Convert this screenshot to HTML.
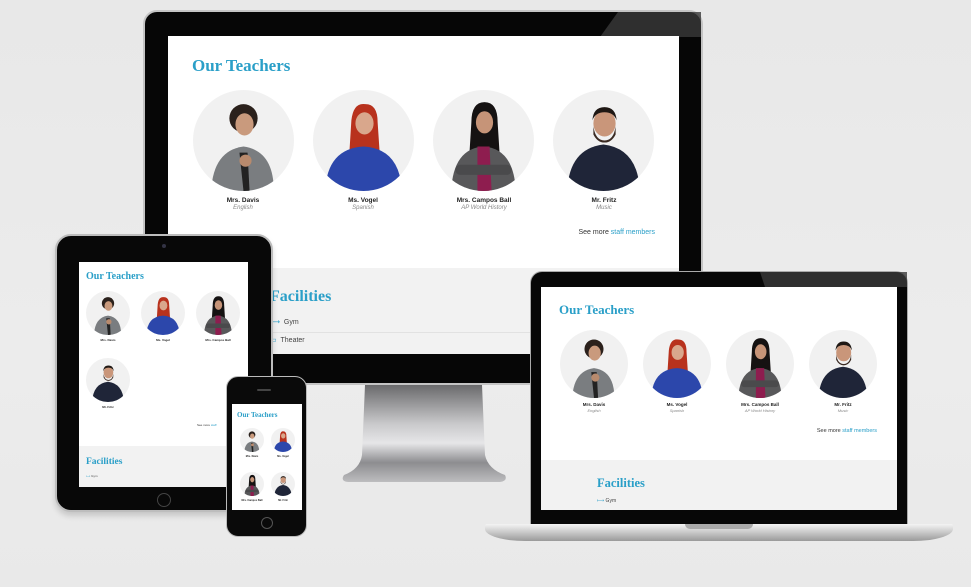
<!DOCTYPE html>
<html><head><meta charset="utf-8">
<style>
*{margin:0;padding:0;box-sizing:border-box}
body{width:971px;height:587px;overflow:hidden;position:relative;background:linear-gradient(#e8e8e8,#ececec 60%,#e9e9e9);font-family:"Liberation Sans",sans-serif}
.a{position:absolute}
.scr{position:absolute;background:#fff;overflow:hidden}
.t{position:absolute;color:#2a9fc8;font-family:"Liberation Serif",serif;font-weight:bold;white-space:nowrap}
.n{position:absolute;text-align:center;color:#222;font-weight:bold;white-space:nowrap;transform:translateX(-50%)}
.s{position:absolute;text-align:center;color:#888;font-style:italic;white-space:nowrap;transform:translateX(-50%)}
.g{position:absolute;background:#f2f2f2}
svg.p{position:absolute}
</style></head><body>
<svg width="0" height="0" style="position:absolute">
<defs>
<clipPath id="cc"><circle cx="50" cy="50" r="50"/></clipPath>
<symbol id="p1" viewBox="0 0 100 100"><g clip-path="url(#cc)"><rect width="100" height="100" fill="#f1f1f1"/>
<path d="M18 100 Q20 60 50 56 Q80 60 80 100Z" fill="#7a7d80"/><path d="M46 62 L50 100 L56 100 L54 62Z" fill="#222"/>
<circle cx="50" cy="28" r="14" fill="#2b211c"/><ellipse cx="51" cy="34" rx="9" ry="11" fill="#c99a7d"/><circle cx="52" cy="70" r="6" fill="#b88a6d"/></g></symbol>
<symbol id="p2" viewBox="0 0 100 100"><g clip-path="url(#cc)"><rect width="100" height="100" fill="#f1f1f1"/>
<path d="M38 30 Q40 12 52 14 Q64 14 64 32 L66 62 L36 62Z" fill="#b8321d"/>
<path d="M12 100 Q14 58 50 56 Q86 58 88 100Z" fill="#2c47ab"/>
<ellipse cx="51" cy="33" rx="9" ry="11" fill="#d9a78c"/></g></symbol>
<symbol id="p3" viewBox="0 0 100 100"><g clip-path="url(#cc)"><rect width="100" height="100" fill="#f1f1f1"/>
<path d="M38 32 Q38 12 51 12 Q64 12 64 32 L66 64 L36 64Z" fill="#151212"/>
<path d="M18 100 Q20 58 50 56 Q80 58 82 100Z" fill="#58585a"/>
<path d="M44 56 L56 56 L58 100 L44 100Z" fill="#8e1d4f"/><rect x="22" y="74" width="56" height="10" rx="5" fill="#4a4a4c"/>
<ellipse cx="51" cy="32" rx="8.5" ry="11" fill="#c69478"/></g></symbol>
<symbol id="p4" viewBox="0 0 100 100"><g clip-path="url(#cc)"><rect width="100" height="100" fill="#f1f1f1"/>
<path d="M14 100 Q16 58 50 54 Q84 58 86 100Z" fill="#1f2538"/>
<ellipse cx="51" cy="33" rx="11" ry="13" fill="#c9967a"/><path d="M40 36 Q42 50 51 50 Q60 50 62 36 L62 44 Q58 52 51 52 Q44 52 40 44Z" fill="#3a2a22"/>
<path d="M39 30 Q40 17 51 17 Q62 17 63 30 Q60 22 51 22 Q42 22 39 30Z" fill="#1f1814"/></g></symbol>
</defs></svg>

<!-- MONITOR -->
<div class="a" style="left:340px;top:385px;width:170px;height:100px">
<svg width="170" height="100"><defs><linearGradient id="st" x1="0" y1="0" x2="0" y2="1"><stop offset="0" stop-color="#6a6a6c"/><stop offset=".4" stop-color="#c9c9cb"/><stop offset=".6" stop-color="#e6e6e8"/><stop offset=".8" stop-color="#8d8d90"/><stop offset="1" stop-color="#bdbdbf"/></linearGradient></defs>
<path d="M25 0 L142 0 L145 70 Q148 84 165 90 Q168 96 160 97 L8 97 Q0 96 4 90 Q20 84 22 70Z" fill="url(#st)"/></svg></div>
<div class="a" style="left:143px;top:10px;width:560px;height:375px;border-radius:14px;background:#060606;border:2px solid #c4c4c4"></div>
<svg class="a" style="left:600px;top:12px" width="101" height="25"><polygon points="18,0 101,0 101,25 0,25" fill="#3a3a3a" opacity=".8"/></svg>
<div class="scr" style="left:168px;top:36px;width:511px;height:318px">
<div class="t" style="left:24px;top:20px;font-size:17px">Our Teachers</div>
<svg class="p" style="left:25px;top:54px" width="101" height="101"><use href="#p1"/></svg>
<svg class="p" style="left:145px;top:54px" width="101" height="101"><use href="#p2"/></svg>
<svg class="p" style="left:265px;top:54px" width="101" height="101"><use href="#p3"/></svg>
<svg class="p" style="left:385px;top:54px" width="101" height="101"><use href="#p4"/></svg>
<div class="n" style="left:75px;top:161px;font-size:6.5px">Mrs. Davis</div><div class="s" style="left:75px;top:169px;font-size:6px">English</div>
<div class="n" style="left:195px;top:161px;font-size:6.5px">Ms. Vogel</div><div class="s" style="left:195px;top:169px;font-size:6px">Spanish</div>
<div class="n" style="left:316px;top:161px;font-size:6.5px">Mrs. Campos Ball</div><div class="s" style="left:316px;top:169px;font-size:6px">AP World History</div>
<div class="n" style="left:436px;top:161px;font-size:6.5px">Mr. Fritz</div><div class="s" style="left:436px;top:169px;font-size:6px">Music</div>
<div class="a" style="right:24px;top:193px;font-size:7px;color:#333">See more <span style="color:#2a9fc8">staff members</span></div>
<div class="g" style="left:0;top:232px;width:511px;height:86px">
<div class="t" style="left:102px;top:20px;font-size:16px">Facilities</div>
<div class="a" style="left:102px;top:50px;font-size:7px;color:#444"><span style="color:#2a9fc8">⟼</span> &nbsp;Gym</div>
<div class="a" style="left:102px;top:64px;width:409px;border-top:1px solid #e2e2e2"></div>
<div class="a" style="left:102px;top:68px;font-size:7px;color:#444"><span style="color:#2a9fc8">▭</span> &nbsp;Theater</div>
</div></div>

<!-- TABLET -->
<div class="a" style="left:55px;top:234px;width:218px;height:278px;border-radius:16px;background:#080808;border:2px solid #bdbdbd;box-shadow:0 4px 6px rgba(0,0,0,.15)"></div>
<div class="a" style="left:162px;top:244px;width:4px;height:4px;border-radius:50%;background:#334"></div>
<div class="a" style="left:157px;top:493px;width:14px;height:14px;border-radius:50%;border:1px solid #444"></div>
<div class="scr" style="left:79px;top:262px;width:169px;height:225px">
<div class="t" style="left:7px;top:9px;font-size:10px">Our Teachers</div>
<svg class="p" style="left:7px;top:29px" width="44" height="44"><use href="#p1"/></svg>
<svg class="p" style="left:62px;top:29px" width="44" height="44"><use href="#p2"/></svg>
<svg class="p" style="left:117px;top:29px" width="44" height="44"><use href="#p3"/></svg>
<svg class="p" style="left:7px;top:96px" width="44" height="44"><use href="#p4"/></svg>
<div class="n" style="left:29px;top:76px;font-size:3px">Mrs. Davis</div><div class="n" style="left:84px;top:76px;font-size:3px">Ms. Vogel</div><div class="n" style="left:139px;top:76px;font-size:3px">Mrs. Campos Ball</div><div class="n" style="left:29px;top:143px;font-size:3px">Mr. Fritz</div>
<div class="a" style="left:118px;top:161px;font-size:3px;color:#333">See more <span style="color:#2a9fc8">staff</span></div>
<div class="g" style="left:0;top:184px;width:169px;height:41px">
<div class="t" style="left:7px;top:11px;font-size:9.5px">Facilities</div>
<div class="a" style="left:7px;top:28px;font-size:3px;color:#444"><span style="color:#2a9fc8">⟼</span> Gym</div></div></div>

<!-- PHONE -->
<div class="a" style="left:226px;top:376px;width:81px;height:161px;border-radius:12px;background:#0a0a0a;border:1.5px solid #bbb"></div>
<div class="a" style="left:257px;top:389px;width:14px;height:2px;border-radius:1px;background:#444"></div>
<div class="a" style="left:261px;top:517px;width:12px;height:12px;border-radius:50%;border:1px solid #555"></div>
<div class="scr" style="left:232px;top:404px;width:70px;height:106px">
<div class="t" style="left:5px;top:7px;font-size:7px">Our Teachers</div>
<svg class="p" style="left:8px;top:24px" width="24" height="24"><use href="#p1"/></svg>
<svg class="p" style="left:39px;top:24px" width="24" height="24"><use href="#p2"/></svg>
<svg class="p" style="left:8px;top:68px" width="24" height="24"><use href="#p3"/></svg>
<svg class="p" style="left:39px;top:68px" width="24" height="24"><use href="#p4"/></svg>
<div class="n" style="left:20px;top:51px;font-size:2.5px">Mrs. Davis</div><div class="n" style="left:51px;top:51px;font-size:2.5px">Ms. Vogel</div>
<div class="n" style="left:20px;top:95px;font-size:2.5px">Mrs. Campos Ball</div><div class="n" style="left:51px;top:95px;font-size:2.5px">Mr. Fritz</div>
</div>

<!-- LAPTOP -->
<div class="a" style="left:530px;top:271px;width:378px;height:254px;border-radius:12px 12px 0 0;background:#070707;border:1.5px solid #aaa;border-bottom:none"></div>
<svg class="a" style="left:760px;top:272px" width="147" height="15"><polygon points="0,0 147,0 147,15 5,15" fill="#3a3a3a" opacity=".8"/></svg>
<div class="scr" style="left:541px;top:287px;width:356px;height:223px">
<div class="t" style="left:18px;top:15px;font-size:13px">Our Teachers</div>
<svg class="p" style="left:19px;top:43px" width="68" height="68"><use href="#p1"/></svg>
<svg class="p" style="left:102px;top:43px" width="68" height="68"><use href="#p2"/></svg>
<svg class="p" style="left:185px;top:43px" width="68" height="68"><use href="#p3"/></svg>
<svg class="p" style="left:268px;top:43px" width="68" height="68"><use href="#p4"/></svg>
<div class="n" style="left:53px;top:115px;font-size:4.5px">Mrs. Davis</div><div class="s" style="left:53px;top:121px;font-size:4px">English</div>
<div class="n" style="left:136px;top:115px;font-size:4.5px">Ms. Vogel</div><div class="s" style="left:136px;top:121px;font-size:4px">Spanish</div>
<div class="n" style="left:219px;top:115px;font-size:4.5px">Mrs. Campos Ball</div><div class="s" style="left:219px;top:121px;font-size:4px">AP World History</div>
<div class="n" style="left:302px;top:115px;font-size:4.5px">Mr. Fritz</div><div class="s" style="left:302px;top:121px;font-size:4px">Music</div>
<div class="a" style="right:20px;top:141px;font-size:5.5px;color:#333">See more <span style="color:#2a9fc8">staff members</span></div>
<div class="g" style="left:0;top:173px;width:356px;height:50px">
<div class="t" style="left:56px;top:16px;font-size:12.5px">Facilities</div>
<div class="a" style="left:56px;top:38px;font-size:5px;color:#444"><span style="color:#2a9fc8">⟼</span> Gym</div></div></div>
<div class="a" style="left:485px;top:524px;width:468px;height:17px;border-radius:2px 2px 40px 40px/2px 2px 12px 12px;background:linear-gradient(#f4f4f4,#c8c8c8 50%,#9a9a9a)"></div>
<div class="a" style="left:685px;top:524px;width:68px;height:5px;border-radius:0 0 5px 5px;background:#aaa"></div>
</body></html>
